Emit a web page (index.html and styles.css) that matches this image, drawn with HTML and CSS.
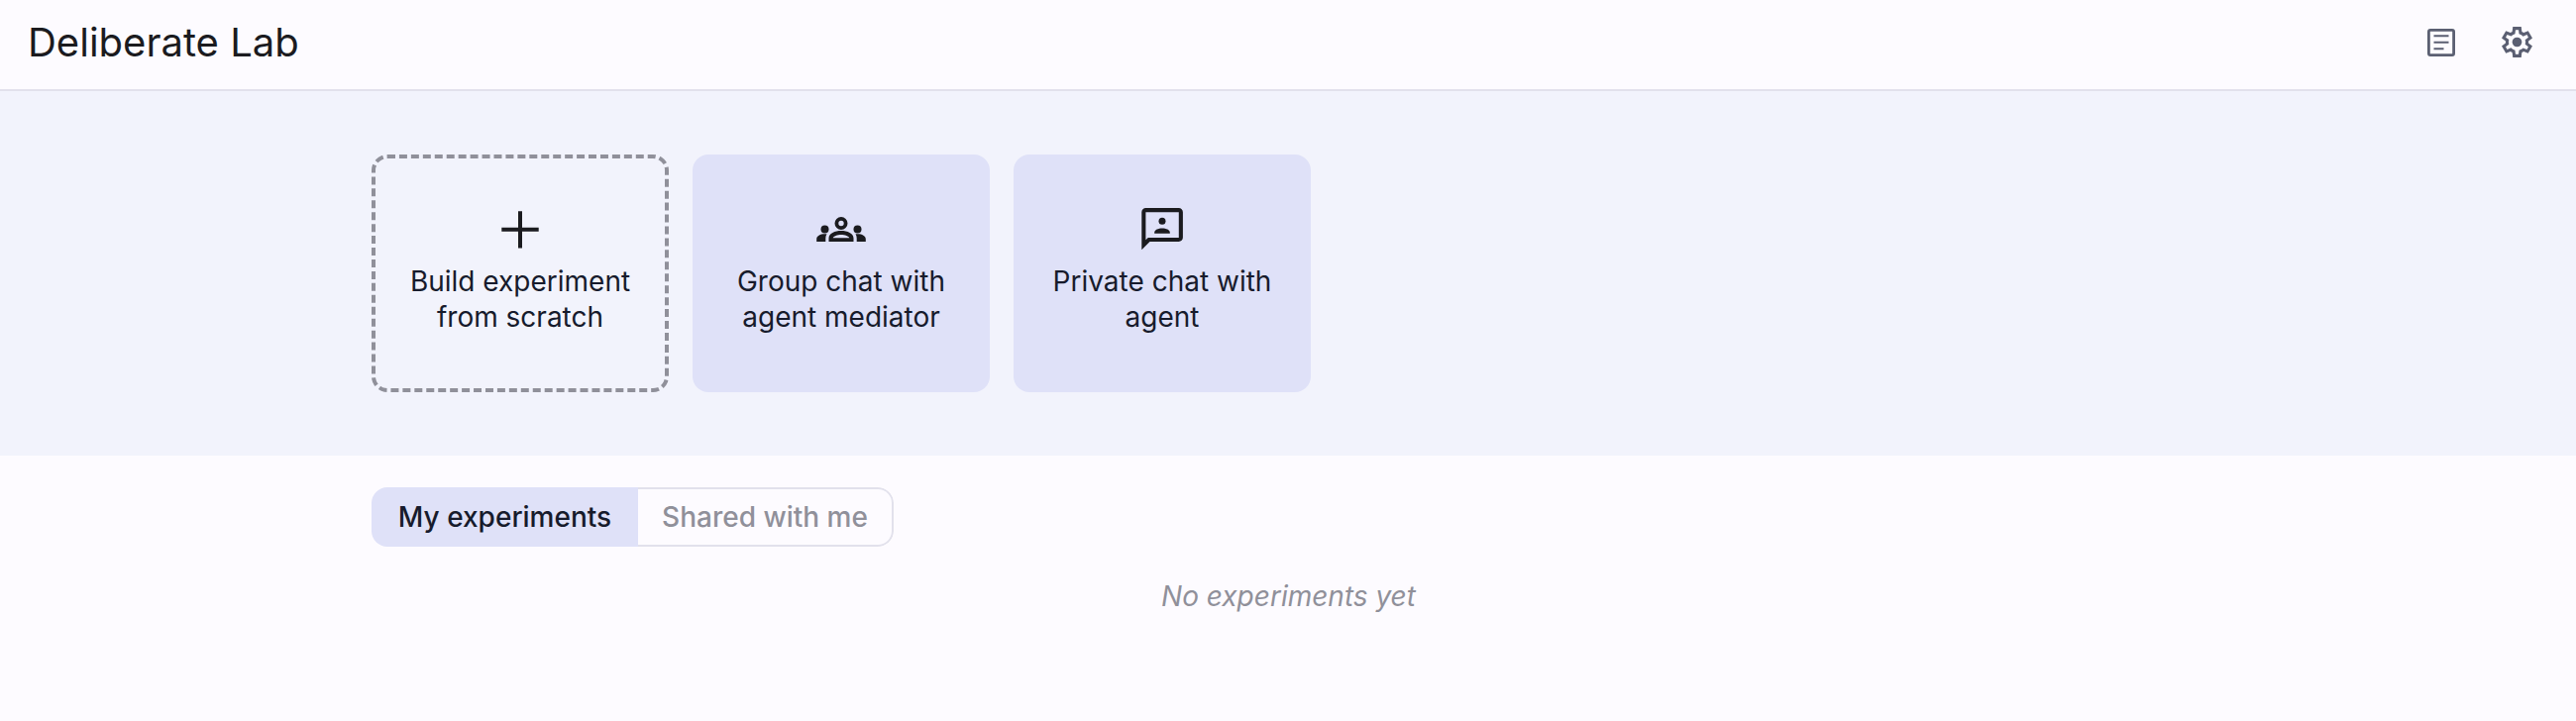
FILE: index.html
```html
<!DOCTYPE html>
<html lang="en">
<head>
<meta charset="utf-8">
<title>Deliberate Lab</title>
<link rel="stylesheet" href="styles.css">
</head>
<body>
<header class="header">
  <h1 class="title">Deliberate Lab</h1>
  <nav class="actions">
    <button class="icon-button" aria-label="Documentation">
      <svg width="28" height="28" viewBox="0 0 28 28"><rect x="1.4" y="1.4" width="25.2" height="25.2" rx="1.6" fill="none" stroke="currentColor" stroke-width="2.8"/><path d="M6.5 7.3h15M6.5 13.8h15M6.5 20.2h10" stroke="currentColor" stroke-width="2" fill="none"/></svg>
    </button>
    <button class="icon-button" aria-label="Settings">
      <svg width="37" height="37" viewBox="0 -960 960 960" fill="currentColor"><path d="m370-80-16-128q-13-5-24.500-12T307-235l-119 50L78-375l103-78q-1-7-1-13.500v-27q0-6.500 1-13.500L78-585l110-190 119 50q11-8 23-15t24-12l16-128h220l16 128q13 5 24.500 12t22.500 15l119-50 110 190-103 78q1 7 1 13.500v27q0 6.500-2 13.500l103 78-110 190-118-50q-11 8-23 15t-24 12L590-80H370Zm70-80h79l14-106q31-8 57.500-23.500T639-327l99 41 39-68-86-65q5-14 7-29.500t2-31.500q0-16-2-31.500t-7-29.500l86-65-39-68-99 42q-22-23-48.500-38.500T533-694l-13-106h-79l-14 106q-31 8-57.500 23.500T321-633l-99-41-39 68 86 64q-5 15-7 30t-2 32q0 16 2 31t7 30l-86 65 39 68 99-42q22 23 48.500 38.500T427-266l13 106Z"/><circle cx="480" cy="-480" r="125"/></svg>
    </button>
  </nav>
</header>
<section class="hero">
  <div class="cards">
    <a class="card card-outline">
      <svg class="card-icon" width="64" height="52" viewBox="0 0 64 52"><path d="M32 7.200v37.300M13.300 25.700h37.400" stroke="currentColor" stroke-width="4" fill="none"/></svg>
      <span class="card-label">Build experiment from scratch</span>
    </a>
    <a class="card">
      <svg class="card-icon" width="64" height="52" viewBox="0 0 64 52" fill="currentColor"><circle cx="32" cy="19.500" r="4.600" fill="none" stroke="currentColor" stroke-width="3.800"/><path fill-rule="evenodd" d="M19.500 38v-3.600c0-4.800 6.200-7.400 12.500-7.400s12.500 2.600 12.500 7.400V38ZM23.700 34.200h16.600c-.7-1.900-4.400-3.300-8.300-3.300s-7.600 1.400-8.300 3.300Z"/><circle cx="15.500" cy="25.500" r="4"/><circle cx="48.500" cy="25.500" r="4"/><path d="M7.200 38v-2.600c0-3.200 3.500-5.200 8.300-5.200l2 .1c-.8 1.300-1.200 2.600-1.200 4.200V38ZM56.800 38v-2.600c0-3.200-3.500-5.200-8.300-5.200l-2 .1c.8 1.300 1.200 2.600 1.200 4.200V38Z"/></svg>
      <span class="card-label">Group chat with agent mediator</span>
    </a>
    <a class="card">
      <svg class="card-icon" width="64" height="52" viewBox="0 0 64 52" fill="currentColor"><path fill-rule="evenodd" d="M11.300 46.300V8.200c0-2.300 1.900-4.200 4.200-4.200h33.200c2.300 0 4.200 1.900 4.200 4.200v25.600c0 2.300-1.900 4.200-4.200 4.200H19.500ZM15.400 36.200 17.800 34H48.800V8.200H15.400Z"/><circle cx="32" cy="17.300" r="3.500"/><path d="M24.200 29.700v-1c0-2.600 3.900-4.200 7.800-4.200s7.800 1.600 7.800 4.200v1Z"/></svg>
      <span class="card-label">Private chat with agent</span>
    </a>
  </div>
</section>
<main class="content">
  <div class="tabs">
    <button class="tab tab-active">My experiments</button>
    <button class="tab">Shared with me</button>
  </div>
  <p class="empty">No experiments yet</p>
</main>
</body>
</html>
```
FILE: styles.css
```css
* { box-sizing: border-box; }

body {
  margin: 0;
  min-height: 728px;
  background: #fdfbff;
  color: #1b1b1f;
  font-family: Inter, "Liberation Sans", sans-serif;
}

button {
  margin: 0;
  border: 0;
  background: none;
  font: inherit;
}

.header {
  display: flex;
  align-items: center;
  justify-content: space-between;
  height: 92px;
  padding: 0 24px 5px 28px;
  border-bottom: 2px solid #e2e1ec;
}

.title {
  margin: 0;
  font-size: 40px;
  font-weight: 400;
  line-height: 48px;
}

.actions { display: flex; gap: 4px; }

.icon-button {
  display: flex;
  align-items: center;
  justify-content: center;
  width: 72px;
  height: 72px;
  padding: 0;
  color: #5b5f72;
}

.hero {
  height: 368px;
  padding: 64px 375px;
  background: #f2f3fc;
}

.cards { display: flex; gap: 24px; }

.card {
  display: flex;
  flex-direction: column;
  align-items: center;
  width: 300px;
  height: 240px;
  padding: 50px 32px 0;
  border-radius: 16px;
  background: #dfe1f8;
}

.card-outline {
  padding: 46px 28px 0;
  border: 4px dashed #90909a;
  background: none;
}

.card-icon { flex: none; }

.card-label {
  margin-top: 8px;
  color: #171b2c;
  font-size: 28px;
  line-height: 36px;
  text-align: center;
}

.content { padding: 32px 374px 0 375px; }

.tabs {
  display: flex;
  width: 527px;
  height: 60px;
  overflow: hidden;
  border-radius: 16px;
}

.tab {
  flex: 1;
  padding: 0;
  border: 2px solid #e2e1ec;
  border-left: 0;
  border-radius: 0 16px 16px 0;
  color: #90909a;
  font-size: 28px;
  font-weight: 500;
  line-height: 36px;
  white-space: nowrap;
}

.tab-active {
  flex: none;
  width: 269px;
  border: 0;
  border-radius: 0;
  background: #dfe1f8;
  color: #171b2c;
}

.empty {
  margin: 32px 0 0;
  color: #90909a;
  font-size: 28px;
  font-style: italic;
  line-height: 36px;
  text-align: center;
}
```
